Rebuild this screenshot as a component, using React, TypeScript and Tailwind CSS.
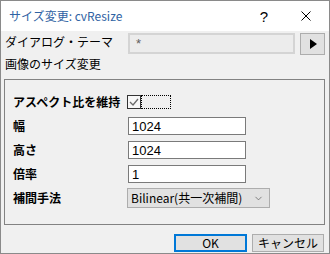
import { ChevronDown } from "lucide-react";

const jp = "font-['Noto_Sans_CJK_JP','Noto_Sans',sans-serif]";

function Field({ label, value }: { label: string; value: string }) {
  return (
    <div className="flex h-[24px] items-center">
      <span className="w-[123px] pl-[8px] text-[12px] font-bold leading-none">{label}</span>
      <div className="flex h-[18px] w-[118px] items-center border border-[#7a7a7a] bg-white pl-[3px] font-['Liberation_Sans',sans-serif] text-[13px] leading-none text-black">
        {value}
      </div>
    </div>
  );
}

export default function App() {
  return (
    <div className={`flex h-[254px] w-[330px] flex-col border border-[#8a8a8a] bg-[#f0f0f0] text-black ${jp}`}>
      {/* タイトルバー */}
      <div className="flex h-[30px] shrink-0 items-center bg-white">
        <span className="ml-[8px] text-[12px] leading-none text-[#2f62a3]">サイズ変更: cvResize</span>
        <span className="ml-auto mr-[33px] font-['Liberation_Sans',sans-serif] text-[15px] leading-none">?</span>
        <svg width="10" height="10" viewBox="0 0 10 10" className="mr-[18px]">
          <path d="M0.5 0.5 L9.5 9.5 M9.5 0.5 L0.5 9.5" stroke="#000" strokeWidth="1" />
        </svg>
      </div>

      {/* テーマ */}
      <div className="mt-[2px] flex h-[22px] items-start">
        <span className="w-[127px] pl-[4px] pt-[1px] text-[12px] leading-[16px]">ダイアログ・テーマ</span>
        <div className="h-[21px] w-[167px] border-2 border-[#d4d4d4] bg-[#ececec] pl-[6px] pt-[2px] font-['Liberation_Sans',sans-serif] text-[13px] leading-[14px] text-[#606060]">
          *
        </div>
        <button className="ml-[5px] flex h-[22px] w-[25px] items-center justify-center border border-[#adadad] bg-[#e1e1e1]">
          <svg width="8" height="10" viewBox="0 0 8 10">
            <path d="M1 0 L8 5 L1 10 Z" fill="#000" />
          </svg>
        </button>
      </div>

      <div className="mt-[1px] h-[16px] pl-[4px] text-[12px] leading-[16px]">画像のサイズ変更</div>

      {/* グループ */}
      <div className="ml-[3px] mt-[7px] h-[146px] w-[321px] border border-[#828282] pt-[10px]">
        <div className="flex h-[24px] items-center">
          <span className="w-[122px] pl-[8px] text-[12px] font-bold leading-none">アスペクト比を維持</span>
          <div className="flex h-[14px] w-[14px] items-center justify-center border border-[#333] bg-[#f7f7f7]">
            <svg width="10" height="8" viewBox="0 0 10 8">
              <path d="M1 4 L4 7 L9 1" stroke="#6a6a6a" strokeWidth="1.3" fill="none" />
            </svg>
          </div>
          <div className="h-[14px] w-[30px] border border-dotted border-black" />
        </div>
        <Field label="幅" value="1024" />
        <Field label="高さ" value="1024" />
        <Field label="倍率" value="1" />
        <div className="flex h-[24px] items-center">
          <span className="w-[122px] pl-[8px] text-[12px] font-bold leading-none">補間手法</span>
          <div className="flex h-[20px] w-[143px] items-center border border-[#adadad] bg-[#e1e1e1] pl-[3px] pr-[5px] text-[12px] leading-none">
            <span>Bilinear(共一次補間)</span>
            <ChevronDown size={11} strokeWidth={1.5} className="ml-auto text-[#555]" />
          </div>
        </div>
      </div>

      {/* ボタン */}
      <div className="mt-[9px] flex gap-[5px] pl-[173px]">
        <button className="flex h-[18px] w-[73px] items-center justify-center border-2 border-[#0078d7] bg-[#e1e1e1] text-[12px] leading-none">
          OK
        </button>
        <button className="flex h-[18px] w-[72px] items-center justify-center border border-[#adadad] bg-[#e1e1e1] text-[12px] leading-none">
          キャンセル
        </button>
      </div>
    </div>
  );
}
